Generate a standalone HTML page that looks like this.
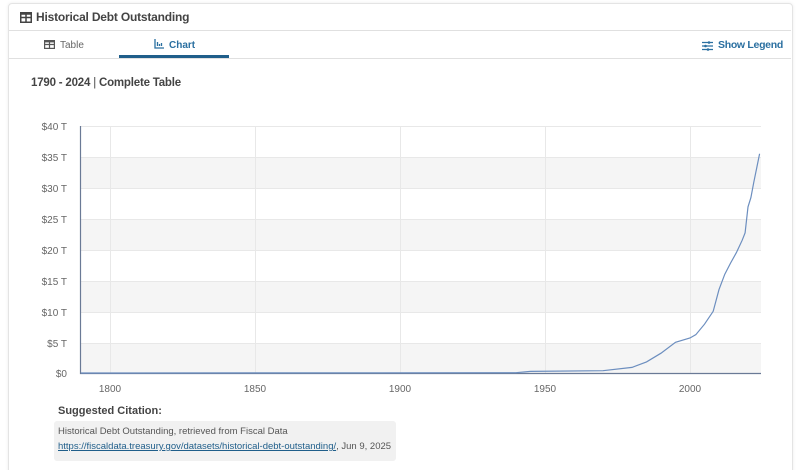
<!DOCTYPE html>
<html><head><style>
html,body{margin:0;width:800px;height:470px;overflow:hidden}
body{background:#fff;font-family:"Liberation Sans",sans-serif;position:relative}
.card{position:absolute;left:8px;top:3px;width:783px;height:480px;border:1px solid #e4e4e4;border-radius:4px;box-shadow:0 0 3px rgba(0,0,0,.08)}
.abs{position:absolute;white-space:nowrap}
</style></head><body>
<div class="card"></div>
<div class="abs" style="left:9px;top:30px;width:782px;border-top:1px solid #e0e0e0"></div>
<div class="abs" style="left:9px;top:58px;width:782px;border-top:1px solid #e0e0e0"></div>
<svg class="abs" style="left:20px;top:12px" width="12" height="11" viewBox="0 0 12 11"><rect x="0.75" y="0.75" width="10.5" height="9.5" fill="none" stroke="#444" stroke-width="1.5"/><path d="M1 5.5H11M6 1V10" stroke="#444" stroke-width="1.5"/><rect x="0.75" y="0.75" width="10.5" height="2" fill="#444"/></svg>
<div class="abs" style="left:36px;top:10px;font-size:12px;font-weight:bold;color:#444;letter-spacing:-0.2px">Historical Debt Outstanding</div>
<svg class="abs" style="left:44px;top:40px" width="11" height="9" viewBox="0 0 11 9"><rect x="0.6" y="0.6" width="9.8" height="7.8" fill="none" stroke="#555" stroke-width="1.2"/><path d="M1 4.5H10M5.5 1V8" stroke="#555" stroke-width="1.2"/><rect x="0.6" y="0.6" width="9.8" height="1.8" fill="#555"/></svg>
<div class="abs" style="left:60px;top:40px;font-size:10px;color:#666">Table</div>
<div class="abs" style="left:119px;top:55px;width:110px;height:3px;background:#1f5e8a"></div>
<svg class="abs" style="left:154px;top:39px" width="10" height="10" viewBox="0 0 10 10"><path d="M1 0V9H10M3.5 3V7M5.5 5V7M7.5 4V7" stroke="#2a6fa0" stroke-width="1.3" fill="none"/></svg>
<div class="abs" style="left:169px;top:40px;font-size:10px;font-weight:bold;color:#2a6fa0">Chart</div>
<svg class="abs" style="left:702px;top:41px" width="11" height="10" viewBox="0 0 11 10"><path d="M0 1.5H11M0 5H11M0 8.5H11" stroke="#2a6fa0" stroke-width="1.2"/><circle cx="7" cy="1.5" r="1.3" fill="#2a6fa0"/><circle cx="3.5" cy="5" r="1.3" fill="#2a6fa0"/><circle cx="6" cy="8.5" r="1.3" fill="#2a6fa0"/></svg>
<div class="abs" style="left:718px;top:39px;font-size:10.5px;font-weight:bold;color:#2a6fa0;letter-spacing:-0.3px">Show Legend</div>
<div class="abs" style="left:31px;top:77px;font-size:11.5px;font-weight:bold;color:#444;letter-spacing:-0.2px">1790 - 2024 <span style="font-weight:normal">|</span> Complete Table</div>
<svg class="abs" style="left:0;top:0" width="800" height="470" font-family="Liberation Sans" font-size="10" fill="#666">
<g fill="#f5f5f5"><rect x="80" y="157" width="681" height="31"/><rect x="80" y="219" width="681" height="31"/><rect x="80" y="281" width="681" height="31"/><rect x="80" y="343" width="681" height="30"/></g>
<g stroke="#e8e8e8"><path d="M80 126.5H761M80 157.5H761M80 188.5H761M80 219.5H761M80 250.5H761M80 281.5H761M80 312.5H761M80 343.5H761M110.5 126V373M255.5 126V373M400.5 126V373M545.5 126V373M690.5 126V373"/></g>
<path d="M80.5 126V373.5H761" stroke="#6a7a96" stroke-width="1.2" fill="none"/>
<g text-anchor="end"><text x="67" y="130">$40 T</text><text x="67" y="161">$35 T</text><text x="67" y="192">$30 T</text><text x="67" y="223">$25 T</text><text x="67" y="254">$20 T</text><text x="67" y="285">$15 T</text><text x="67" y="316">$10 T</text><text x="67" y="347">$5 T</text><text x="67" y="377">$0</text></g>
<g text-anchor="middle"><text x="110" y="392">1800</text><text x="255" y="392">1850</text><text x="400" y="392">1900</text><text x="545" y="392">1950</text><text x="690" y="392">2000</text></g>
<polyline fill="none" stroke="#6c8ebf" stroke-width="1.2" points="81,373 516,372.7 530.5,371.4 603,370.7 632,367.4 646.5,361.9 661,353.2 675.5,342.3 690,338 695.8,334.7 704.5,324.2 713.2,311.3 719,289.6 724.8,274.2 730.6,263 736.4,252.6 742.2,240.2 745.1,232.8 748,206.9 750.9,197.6 753.8,182.2 756.7,168 759.6,153.8"/>
</svg>
<div class="abs" style="left:58px;top:405px;font-size:11px;font-weight:bold;color:#444">Suggested Citation:</div>
<div class="abs" style="left:54px;top:421px;width:342px;height:40px;background:#f1f1f1;border-radius:3px"></div>
<div class="abs" style="left:58px;top:426px;font-size:9.5px;color:#555">Historical Debt Outstanding, retrieved from Fiscal Data</div>
<div class="abs" style="left:58px;top:441px;font-size:9.5px;color:#555"><span style="color:#1f5e8a;text-decoration:underline">https://fiscaldata.treasury.gov/datasets/historical-debt-outstanding/</span>, Jun 9, 2025</div>
</body></html>
